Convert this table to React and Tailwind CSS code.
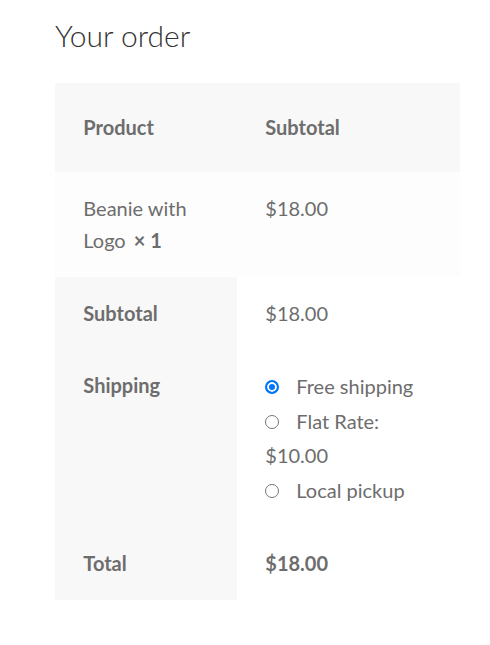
import React, { useState } from "react";

const shippingOptions = [
  { id: "free_shipping", label: "Free shipping" },
  { id: "flat_rate", label: "Flat Rate:", price: "$10.00" },
  { id: "local_pickup", label: "Local pickup" },
];

export default function App() {
  const [method, setMethod] = useState("free_shipping");

  return (
    <div className="min-h-screen bg-white pl-[55px] pt-[16px] font-['Lato',sans-serif] text-[20px] text-[#6d6d6d]">
      <h3 className="mb-[29px] text-[30px] font-light leading-[38px] text-[#333333]">
        Your order
      </h3>

      <div className="w-[405px]">
        {/* Head */}
        <div className="grid grid-cols-[182px_223px] bg-[#f8f8f8] font-bold leading-[32.4px]">
          <div className="p-[28.3px]">Product</div>
          <div className="p-[28.3px]">Subtotal</div>
        </div>

        {/* Cart item */}
        <div className="grid grid-cols-[182px_223px] bg-[#fdfdfd] leading-[32.4px]">
          <div className="px-[28.3px] py-[20px]">
            Beanie with Logo
            <strong className="ml-[8px] font-bold">×&nbsp;1</strong>
          </div>
          <div className="px-[28.3px] py-[20px]">$18.00</div>
        </div>

        {/* Totals */}
        <div className="grid grid-cols-[182px_223px] leading-[32.4px]">
          <div className="bg-[#f8f8f8] px-[28.3px] py-[20px] font-bold">Subtotal</div>
          <div className="px-[28.3px] py-[20px]">$18.00</div>

          <div className="bg-[#f8f8f8] px-[28.3px] py-[20px] font-bold">Shipping</div>
          <div className="px-[28.3px] py-[20px]">
            <ul className="flex flex-col gap-[1px]">
              {shippingOptions.map((opt) => (
                <li key={opt.id} className="leading-[34px]">
                  <input
                    type="radio"
                    name="shipping_method"
                    id={opt.id}
                    checked={method === opt.id}
                    onChange={() => setMethod(opt.id)}
                    className="relative -top-[2px] m-0 mr-[17px] inline-block h-[14px] w-[14px] appearance-none rounded-full border border-[#767676] bg-white align-middle checked:border-2 checked:border-[#0075ff] checked:bg-[#0075ff] checked:shadow-[inset_0_0_0_2px_#fff]"
                  />
                  <label htmlFor={opt.id}>
                    {opt.label}
                    {opt.price && <span> {opt.price}</span>}
                  </label>
                </li>
              ))}
            </ul>
          </div>

          <div className="bg-[#f8f8f8] px-[28.3px] py-[20px] font-bold">Total</div>
          <div className="px-[28.3px] py-[20px] font-bold">$18.00</div>
        </div>
      </div>
    </div>
  );
}
